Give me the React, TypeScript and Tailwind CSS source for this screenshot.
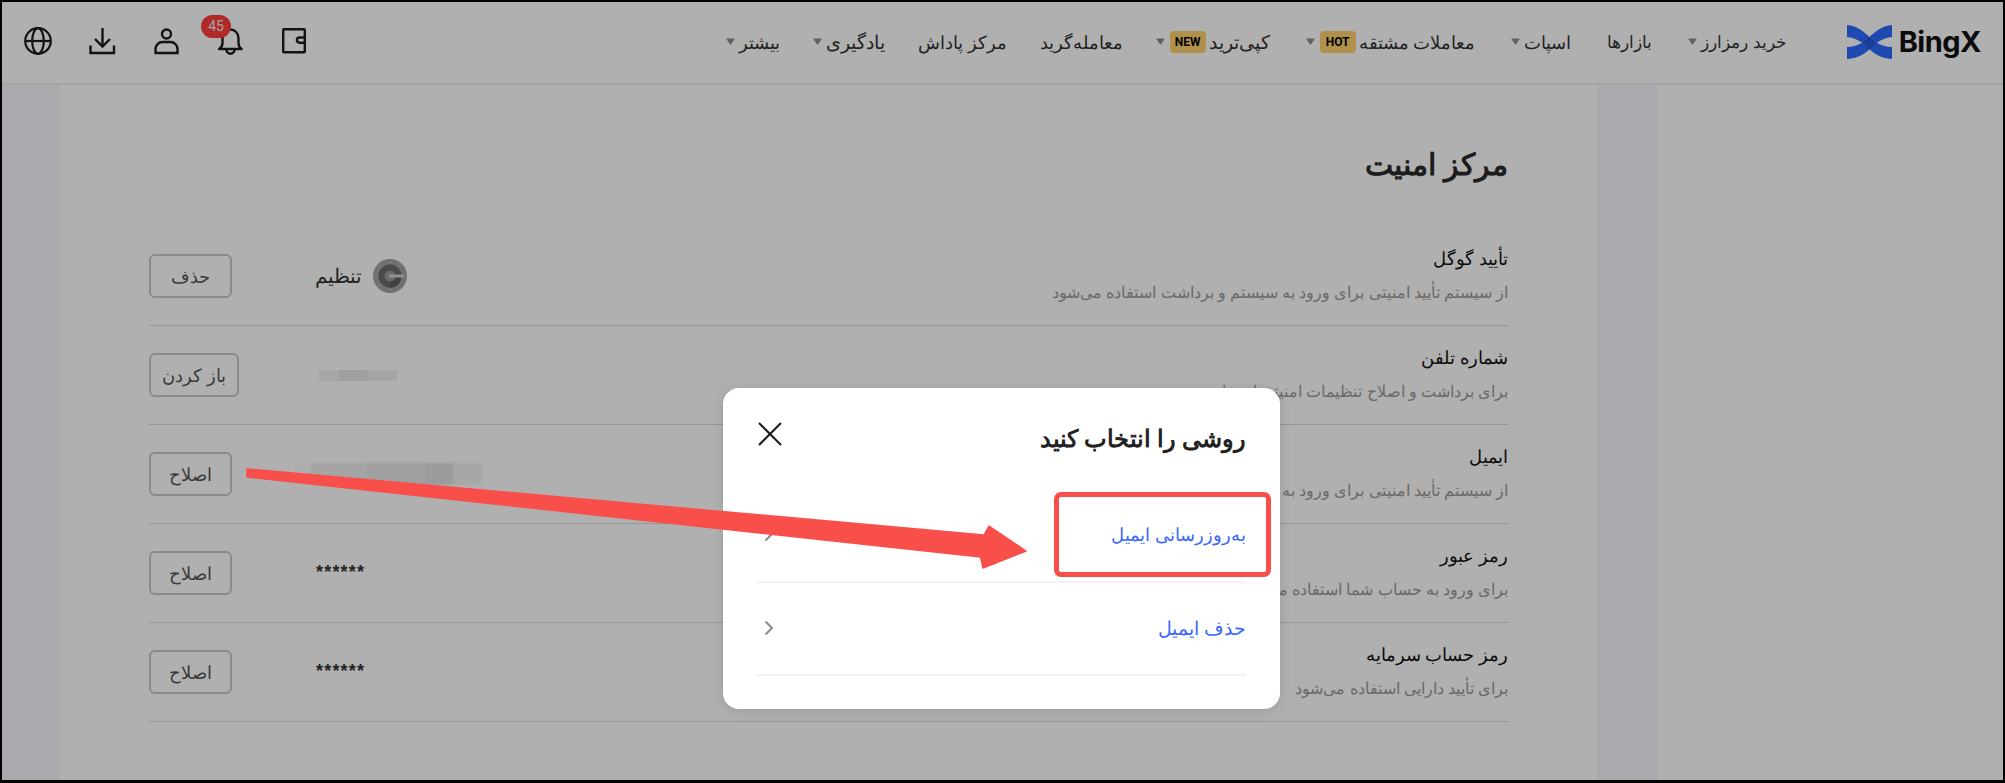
function Caret() {
  return (
    <svg width="9" height="7" viewBox="0 0 9 7" className="shrink-0">
      <path d="M1 1 H8 L4.5 6 Z" fill="#8c8c8c" stroke="#8c8c8c" strokeWidth="1.2" strokeLinejoin="round" />
    </svg>
  );
}

function NavItem({ label, size, badge, caret, tight }: { label: string; size: string; badge?: string; caret?: boolean; tight?: boolean }) {
  return (
    <div className={tight ? "flex items-center -mr-[3px]" : "flex items-center"}>
      <span className={`${size} leading-6 text-[#333] whitespace-nowrap`}>{label}</span>
      {badge && (
        <span dir="ltr" className="mr-[3px] w-[36px] h-[22px] rounded-[4px] bg-[#ffd26d] flex items-center justify-center font-['Roboto',sans-serif] font-bold text-[12px] text-black">
          {badge}
        </span>
      )}
      {caret && (
        <span className={badge ? "mr-[5px] flex" : "mr-[4px] flex"}>
          <Caret />
        </span>
      )}
    </div>
  );
}

function Logo() {
  return (
    <div dir="ltr" className="flex items-center gap-[7px]">
      <svg width="45" height="34" viewBox="0 0 45 34" className="shrink-0">
        <path d="M0 0 C11 1 17 7 22.5 12 C28 17 34 21.5 45 22 V34 C33 33.5 26 28 20 22 C15 17.5 9 12.5 0 12 Z" fill="#2c6aff" />
        <path d="M45 0 C34 1 28 7 22.5 12 C17 17 11 21.5 0 22 V34 C12 33.5 19 28 25 22 C30 17.5 36 12.5 45 12 Z" fill="#2c6aff" />
        <path d="M22.5 12 C25 14.5 27 16 29 17.5 C27.5 19 26.5 20.5 25 22 C23.5 23.5 22.5 24 22.5 24 C22 23.5 21 23 20 22 C18.5 20.5 17.5 19 16 17.5 C18 16 20 14.5 22.5 12 Z" fill="#2658d8" />
      </svg>
      <span className="font-['Inter',sans-serif] font-bold text-[29px] leading-none tracking-[-0.5px] text-[#111]">BingX</span>
    </div>
  );
}

function Globe() {
  return (
    <svg width="28" height="28" viewBox="0 0 28 28" fill="none" stroke="#1c1c1c" strokeWidth="2.2">
      <circle cx="14" cy="14" r="12.8" />
      <ellipse cx="14" cy="14" rx="5.8" ry="12.8" />
      <path d="M1.5 14 H26.5" />
    </svg>
  );
}
function Download() {
  return (
    <svg width="28" height="28" viewBox="0 0 28 28" fill="none" stroke="#1c1c1c" strokeWidth="2.4">
      <path d="M14.5 1 V19" />
      <path d="M7 12 L14.5 19.5 L22 12" />
      <path d="M2.5 18.5 V26 H26 V18.5" />
    </svg>
  );
}
function Person() {
  return (
    <svg width="28" height="28" viewBox="0 0 28 28" fill="none" stroke="#1c1c1c" strokeWidth="2.4">
      <circle cx="14.5" cy="7" r="4.5" />
      <path d="M3.5 26 V22 A7 7 0 0 1 10.5 15 H18.5 A7 7 0 0 1 25.5 22 V26 Z" />
    </svg>
  );
}
function Bell() {
  return (
    <svg width="28" height="28" viewBox="0 0 28 28" fill="none" stroke="#1c1c1c" strokeWidth="2.4">
      <path d="M6.5 11 A8 8.5 0 0 1 22.5 11 V16 C22.5 19 24 21 25.5 22 H3 C4.5 21 6.5 19 6.5 16 Z" strokeLinejoin="round" />
      <path d="M10.5 22.5 A4 4.2 0 0 0 18.5 22.5" />
    </svg>
  );
}
function Wallet() {
  return (
    <svg width="28" height="28" viewBox="0 0 28 28" fill="none" stroke="#1c1c1c" strokeWidth="2.4">
      <rect x="3.2" y="2.2" width="21.6" height="23" rx="0.8" />
      <path d="M24.5 10.5 H19.5 A2.6 2.6 0 0 0 19.5 15.7 H24.5" />
    </svg>
  );
}

function GoogleAuth() {
  return (
    <svg width="34" height="34" viewBox="0 0 34 34" className="shrink-0">
      <circle cx="17" cy="17" r="17" fill="#a2a2a2" />
      <circle cx="17" cy="17" r="11.5" fill="#6c6c6c" />
      <path d="M17 17 L28.5 17 A11.5 11.5 0 0 1 17 28.5 Z" fill="#5e5e5e" />
      <circle cx="17" cy="17" r="5.5" fill="#9a9a9a" />
      <rect x="16" y="15.6" width="15" height="2.8" rx="1" fill="#d0d0d0" />
      <circle cx="17" cy="3" r="1" fill="#bcbcbc" />
      <circle cx="17" cy="31" r="1" fill="#bcbcbc" />
      <circle cx="3" cy="17" r="1" fill="#bcbcbc" />
      <circle cx="7" cy="7" r="1" fill="#bcbcbc" />
      <circle cx="7" cy="27" r="1" fill="#bcbcbc" />
      <circle cx="27" cy="7" r="1" fill="#bcbcbc" />
    </svg>
  );
}

function ActionButton({ children }: { children: string }) {
  return (
    <button className="h-[44px] px-[11px] min-w-[83px] rounded-[6px] border-2 border-[#c8c8c8] bg-transparent text-[18px] text-[#555] whitespace-nowrap">
      {children}
    </button>
  );
}

function BlurPhone() {
  return (
    <div className="ml-[26px] flex h-[11px] w-[78px] blur-[0.6px]">
      <div className="w-[20px] bg-[#f2f2f2]" />
      <div className="w-[28px] bg-[#e6e6e6]" />
      <div className="w-[30px] bg-[#efefef]" />
    </div>
  );
}
function BlurEmail() {
  return (
    <div className="flex h-[22px] w-[189px] blur-[1px]">
      <div className="w-[18px] bg-[#fdfdfd]" />
      <div className="w-[56px] bg-[#f0f0f0]" />
      <div className="w-[58px] bg-[#e8e8e8]" />
      <div className="w-[28px] bg-[#e2e2e2]" />
      <div className="w-[29px] bg-[#f2f2f2]" />
    </div>
  );
}

function Row({ title, desc, value, action }: { title: string; desc: string; value: React.ReactNode; action: string }) {
  return (
    <div className="h-[99px] border-b border-[#d8d8d8] flex items-center">
      <div className="flex-1 pb-[3px]">
        <div className="text-[18px] leading-[26px] text-[#111]">{title}</div>
        <div className="mt-[9px] text-[16px] leading-[24px] text-[#999]">{desc}</div>
      </div>
      <div dir="ltr" className="w-[194px] flex items-center">{value}</div>
      <div dir="ltr" className="w-[144px] flex">
        <ActionButton>{action}</ActionButton>
      </div>
    </div>
  );
}

const Stars = () => <span className="ml-[23px] text-[#333] text-[18px] leading-[24px] mt-[-2px] font-['Liberation_Sans',sans-serif] font-bold tracking-[1.2px]">******</span>;

export default function App() {
  return (
    <div dir="rtl" className="relative box-border w-[2005px] h-[783px] overflow-hidden border-2 border-b-[3px] border-black bg-white font-['Noto_Sans',sans-serif]">
      <header dir="ltr" className="h-[83px] border-b-2 border-[#f0f0f0] flex items-center justify-between pl-[22px] pr-[22px]">
        <div className="flex items-center gap-[36px] mt-[-4px]">
          <Globe />
          <Download />
          <Person />
          <div className="relative">
            <Bell />
            <span className="absolute -left-[15px] -top-[12px] w-[30px] h-[23px] rounded-full bg-[#ff3d3d] text-[#eee] text-[14px] leading-[23px] text-center font-['Roboto',sans-serif]">45</span>
          </div>
          <Wallet />
        </div>
        <div dir="rtl" className="flex items-center gap-[60px] mt-[-2px]">
          <Logo />
          <nav className="flex items-center gap-[36px]">
            <NavItem size="text-[16.5px]" label="خرید رمزارز" caret />
            <NavItem size="text-[17px]" label="بازارها" />
            <NavItem size="text-[17.5px]" label="اسپات" caret />
            <NavItem size="text-[18px]" label="معاملات مشتقه" badge="HOT" caret />
            <NavItem size="text-[18.5px]" label="کپی‌ترید" badge="NEW" caret />
            <NavItem size="text-[17.5px]" label="معامله‌گرید" tight />
            <NavItem size="text-[18px]" label="مرکز پاداش" tight />
            <NavItem size="text-[19px]" label="یادگیری" caret tight />
            <NavItem size="text-[18px]" label="بیشتر" caret tight />
          </nav>
        </div>
      </header>

      <div dir="ltr" className="flex h-[696px]">
        <div className="w-[58px] bg-[#f5f6fb]" />
        <main dir="rtl" className="w-[1537px] pl-[89px] pr-[89px] pt-[54px]">
          <h1 className="text-[30px] leading-[50px] font-bold text-[#2a2a2a] h-[88px]">مرکز امنیت</h1>
          <Row
            title="تأیید گوگل"
            desc="از سیستم تأیید امنیتی برای ورود به سیستم و برداشت استفاده می‌شود"
            action="حذف"
            value={
              <div className="ml-[22px] flex items-center gap-[11px]">
                <span className="text-[19.5px] text-[#333]">تنظیم</span>
                <GoogleAuth />
              </div>
            }
          />
          <Row title="شماره تلفن" desc="برای برداشت و اصلاح تنظیمات امنیتی استفاده می‌شود" action="باز کردن" value={<BlurPhone />} />
          <Row title="ایمیل" desc="از سیستم تأیید امنیتی برای ورود به سیستم و برداشت استفاده می‌شود" action="اصلاح" value={<BlurEmail />} />
          <Row title="رمز عبور" desc="برای ورود به حساب شما استفاده می‌شود" action="اصلاح" value={<Stars />} />
          <Row title="رمز حساب سرمایه" desc="برای تأیید دارایی استفاده می‌شود" action="اصلاح" value={<Stars />} />
        </main>
        <div className="w-[61px] bg-[#f5f6fb]" />
        <div className="flex-1" />
      </div>

      {/* dim overlay */}
      <div className="absolute inset-0 bg-black/[0.31]" />

      {/* dialog */}
      <div className="absolute left-[721px] top-[386px] w-[557px] h-[321px] rounded-[16px] bg-white px-[34px] shadow-[0_2px_12px_rgba(0,0,0,0.12)]">
        <div className="h-[102px] flex items-start justify-between pt-[33px]">
          <h2 className="text-[23.5px] leading-[34px] font-bold text-[#222]">روشی را انتخاب کنید</h2>
          <svg width="26" height="26" viewBox="0 0 26 26" fill="none" stroke="#1a1a1a" strokeWidth="2">
            <path d="M2 2 L24 24 M24 2 L2 24" />
          </svg>
        </div>
        <div className="h-[93px] border-b-2 border-[#f2f2f2] flex items-center justify-between pb-[3px]">
          <span className="text-[17.5px] text-[#3a67ff]">به‌روزرسانی ایمیل</span>
          <svg width="10" height="16" viewBox="0 0 10 16" fill="none" stroke="#8a8a8a" strokeWidth="2" className="ml-[7px]"><path d="M1.5 1.5 L8 8 L1.5 14.5" /></svg>
        </div>
        <div className="h-[93px] border-b-2 border-[#f2f2f2] flex items-center justify-between pb-[2px]">
          <span className="text-[18.5px] text-[#3a67ff]">حذف ایمیل</span>
          <svg width="10" height="16" viewBox="0 0 10 16" fill="none" stroke="#8a8a8a" strokeWidth="2" className="ml-[7px]"><path d="M1.5 1.5 L8 8 L1.5 14.5" /></svg>
        </div>
      </div>

      {/* annotation: highlight box */}
      <div className="absolute left-[1052px] top-[490px] w-[217px] h-[85px] box-border border-[5px] border-[#f94f4b] rounded-[7px]" />

      {/* annotation: arrow */}
      <svg width="2005" height="783" viewBox="0 0 2005 783" className="absolute -left-[2px] -top-[2px] pointer-events-none">
        <path d="M247 469 L984 535 L989 526 L1026 551 L983 568 L980.5 557 L247 477 Z" fill="#f94f4b" stroke="#f94f4b" strokeWidth="1.5" strokeLinejoin="round" />
      </svg>
    </div>
  );
}
